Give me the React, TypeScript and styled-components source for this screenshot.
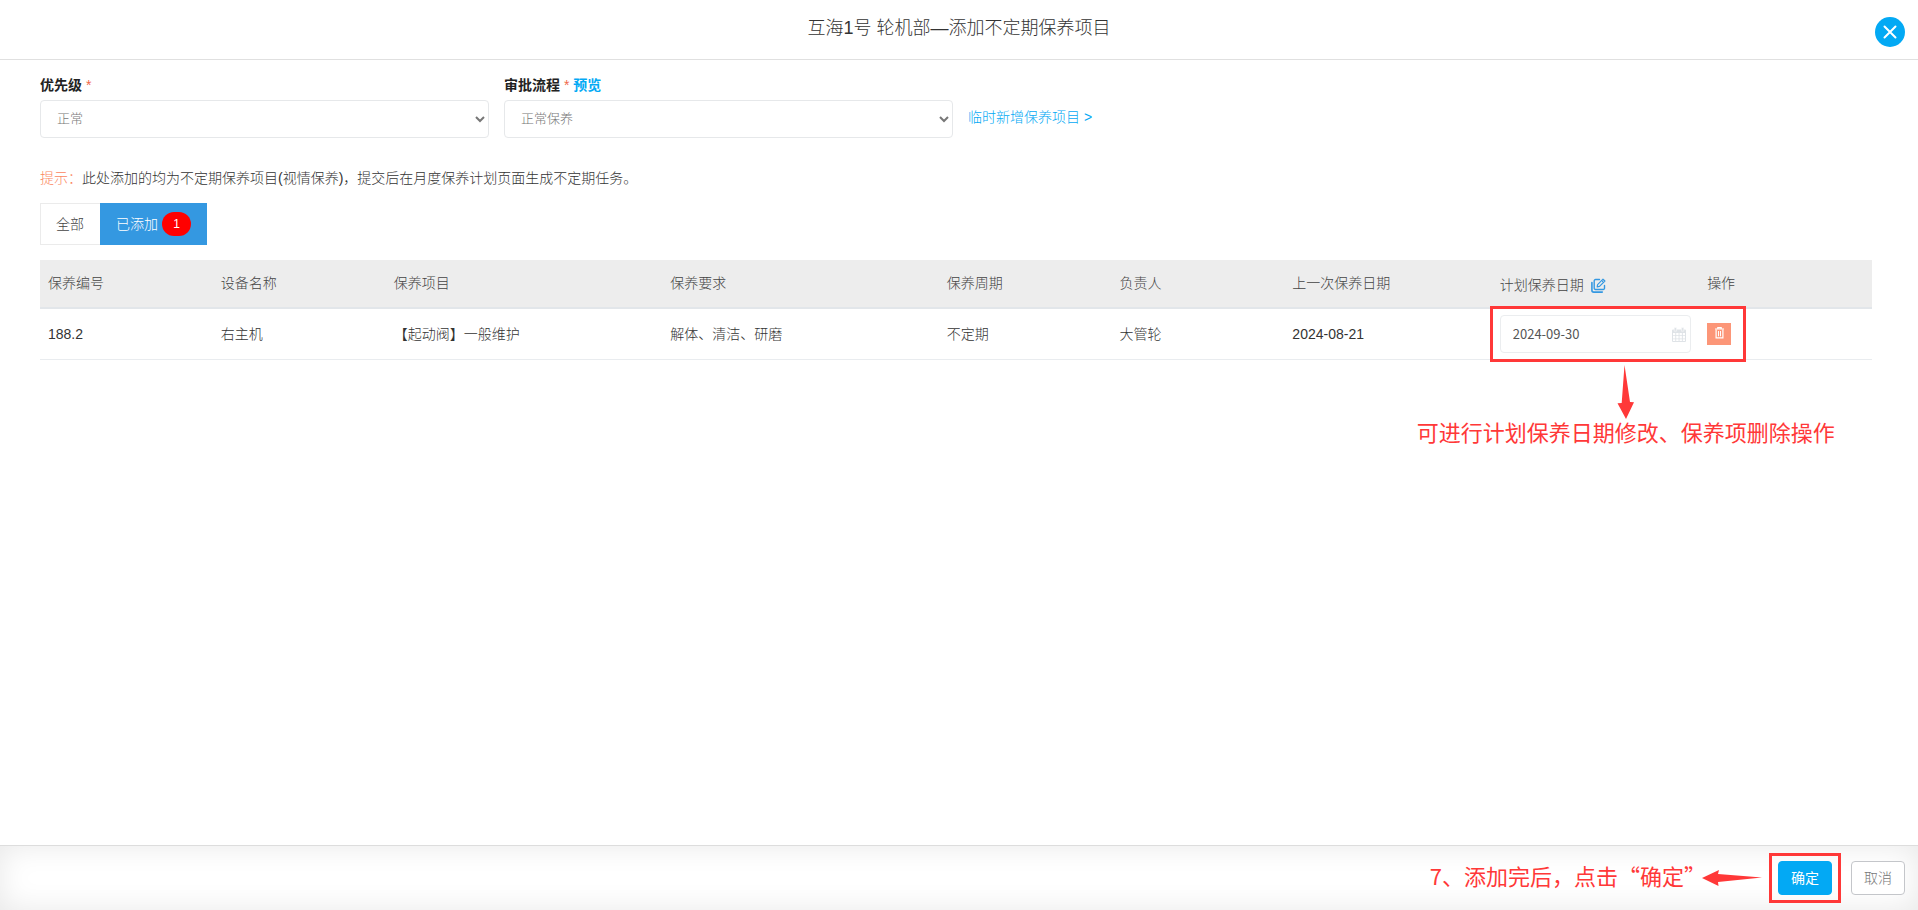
import React, { useState } from "react";
import styled, { createGlobalStyle } from "styled-components";

const SANS = `"Liberation Sans", "Noto Sans CJK SC", sans-serif`;
const CJK = `"Noto Sans CJK SC", "Liberation Sans", sans-serif`;
const ACCENT = "#03a9f4";
const MARK = "#ff3838";

const GlobalStyle = createGlobalStyle`
  * { box-sizing: border-box; }
  body {
    margin: 0;
    background: #fff;
    color: #333;
    font-family: ${SANS};
    font-size: 14px;
    font-weight: 300;
    line-height: 20px;
  }
  button, input, select { font-family: inherit; font-weight: inherit; margin: 0; }
`;

const Page = styled.div`
  display: flex;
  flex-direction: column;
  min-height: 100vh;
`;

const Header = styled.header`
  display: grid;
  grid-template-columns: 1fr auto 1fr;
  height: 60px;
  padding: 16px 13px 0;
  border-bottom: 1px solid #e0e0e0;
`;

const Title = styled.h1`
  grid-column: 2;
  margin: 0;
  font-size: 18px;
  font-weight: 300;
  line-height: 24px;
`;

const CloseButton = styled.button`
  justify-self: end;
  display: flex;
  align-items: center;
  justify-content: center;
  width: 30px;
  height: 30px;
  padding: 0;
  margin-top: 1px;
  border: 0;
  border-radius: 50%;
  background: ${ACCENT};
  cursor: pointer;
`;

const Main = styled.main`
  flex: 1;
  padding: 15px 46px 24px 40px;
`;

const Filters = styled.div`
  display: flex;
  gap: 15px;
`;

const Field = styled.div`
  flex: 0 0 calc(25% - 9px);
`;

const FieldLabel = styled.div`
  height: 25px;
  color: #222;
  font-weight: 700;
`;

const Required = styled.span`
  color: #f0694a;
  font-weight: 400;
`;

const Link = styled.a`
  color: ${ACCENT};
  text-decoration: none;
`;

const FilterLink = styled(Link)`
  padding-top: 32px;
`;

const Select = styled.select`
  display: block;
  width: 100%;
  height: 38px;
  padding: 0 1px 2px 12px;
  border: 1px solid #e6e8ea;
  border-radius: 4px;
  background: #fff;
  color: #777;
  font-size: 13px;
`;

const Tip = styled.p`
  margin: 30px 0 15px;
`;

const TipLabel = styled.span`
  color: #fb8560;
`;

const Tabs = styled.div`
  display: flex;
  margin-bottom: 15px;
`;

const Tab = styled.button<{ $active?: boolean }>`
  display: flex;
  align-items: center;
  gap: 4px;
  height: 42px;
  padding: ${(p) => (p.$active ? "0 16px 2px" : "0 16px 2px 15px")};
  border: ${(p) => (p.$active ? "0" : "1px solid #ebebeb")};
  border-right: 0;
  background: ${(p) => (p.$active ? "#3498e1" : "#fff")};
  color: ${(p) => (p.$active ? "#fff" : "#444")};
  font-size: 14px;
  cursor: pointer;
`;

const Badge = styled.span`
  width: 29px;
  height: 24px;
  margin-top: 2px;
  border-radius: 12px;
  background: #f00;
  font-size: 12px;
  font-weight: 400;
  line-height: 24px;
  text-align: center;
`;

const Table = styled.table`
  width: 100%;
  table-layout: fixed;
  border-collapse: separate;
  border-spacing: 0;
`;

const Th = styled.th`
  height: 49px;
  padding: 0 8px 2px;
  border-bottom: 2px solid #e2e6ea;
  background: #ededed;
  color: #444;
  font-weight: 300;
  text-align: left;
`;

const ThContent = styled.span`
  display: flex;
  align-items: center;
  gap: 7px;
  padding-top: 4px;
`;

const Td = styled.td`
  position: relative;
  height: 51px;
  padding: 0 8px;
  border-bottom: 1px solid #e9ecef;
`;

const IconButton = styled.button`
  display: flex;
  padding: 2px 0 0;
  border: 0;
  background: none;
  color: #3498e1;
  cursor: pointer;
`;

const DateField = styled.label`
  display: flex;
  align-items: center;
  height: 38px;
  padding: 0 4px 0 12px;
  border: 1px solid #ebedef;
  border-radius: 4px;
  color: #dfe3e7;
`;

const DateInput = styled.input`
  flex: 1;
  min-width: 0;
  padding: 0 0 2px;
  border: 0;
  outline: 0;
  background: none;
  color: #555;
  font-family: ${CJK};
  font-size: 13px;
  font-weight: 400;
`;

const DeleteButton = styled.button`
  display: flex;
  justify-content: center;
  width: 24px;
  height: 22px;
  padding: 4px 0 0 1px;
  border: 0;
  background: #fc9678;
  color: #fff;
  cursor: pointer;
`;

const RowCallout = styled.div`
  position: absolute;
  z-index: 1;
  top: -3px;
  left: -2px;
  width: 256px;
  height: 56px;
  border: 3px solid ${MARK};
  pointer-events: none;
`;

const RowCalloutNote = styled.div`
  position: absolute;
  top: 56px;
  right: -92px;
  display: flex;
  flex-direction: column;
  align-items: center;
`;

const NoteText = styled.span`
  color: ${MARK};
  font-family: ${CJK};
  font-size: 22px;
  font-weight: 400;
  line-height: 24px;
  white-space: nowrap;
`;

const Footer = styled.footer`
  display: flex;
  align-items: center;
  justify-content: flex-end;
  gap: 19px;
  height: 65px;
  padding: 0 13px;
  border-top: 1px solid #ddd;
  box-shadow: inset 0 0 30px #e8e8e8;
`;

const FooterButton = styled.button<{ $primary?: boolean }>`
  width: 54px;
  height: 34px;
  padding: 0 0 2px;
  border: 1px solid ${(p) => (p.$primary ? ACCENT : "#c4c6ca")};
  border-radius: 4px;
  background: ${(p) => (p.$primary ? ACCENT : "#fff")};
  color: ${(p) => (p.$primary ? "#fff" : "#777")};
  font-size: 14px;
  font-weight: ${(p) => (p.$primary ? 400 : 300)};
  cursor: pointer;
`;

const ConfirmWrap = styled.div`
  position: relative;
`;

const ConfirmFrame = styled.div`
  position: absolute;
  inset: -8px -9px;
  border: 3px solid ${MARK};
  pointer-events: none;
`;

const ConfirmNote = styled.div`
  position: absolute;
  top: 2px;
  right: 100%;
  display: flex;
  align-items: center;
  padding-right: 16px;
`;

const LeftArrow = styled.svg`
  margin: 6px 0 0 -4px;
`;

const CloseIcon = () => (
  <svg width="14" height="14" viewBox="0 0 14 14" aria-hidden="true">
    <path d="M1.5 1.5l11 11M12.5 1.5l-11 11" stroke="#fff" strokeWidth="2" strokeLinecap="round" />
  </svg>
);

const EditIcon = () => (
  <svg width="15" height="15" viewBox="0 0 15 15" fill="none" stroke="currentColor" strokeLinejoin="round" strokeLinecap="round" aria-hidden="true">
    <path d="M8.500 1.500H4.500a1.300 1.300 0 0 0-1.300 1.300v7.400a1.300 1.300 0 0 0 1.300 1.300h7.700a1.300 1.300 0 0 0 1.300-1.300V7.500" strokeWidth="1.400" />
    <path d="M.9 4.500v7.800A1.800 1.800 0 0 0 2.700 14.100h8.600" strokeWidth="1.600" />
    <path d="M6.200 8.800l.4-2.200L12 1.200l1.900 1.800-5.400 5.400z" strokeWidth="1.200" />
    <path d="M10.600 2.600l1.900 1.800" strokeWidth="1" />
  </svg>
);

const CalendarIcon = () => (
  <svg width="14" height="15" viewBox="0 0 14 15" aria-hidden="true">
    <path d="M1 2.500h12a1 1 0 0 1 1 1V14a1 1 0 0 1-1 1H1a1 1 0 0 1-1-1V3.500a1 1 0 0 1 1-1z" fill="currentColor" />
    <path d="M2.200.500h2.400v3.700H2.200zM9.400.500h2.400v3.700H9.400z" fill="currentColor" stroke="#fff" strokeWidth=".5" />
    <path d="M1 6h2.300v2.300H1zM4.200 6h2.400v2.300H4.200zM7.500 6h2.400v2.300H7.500zM10.800 6H13v2.300h-2.200zM1 9.100h2.300v2.300H1zM4.200 9.100h2.400v2.300H4.200zM7.500 9.100h2.400v2.300H7.500zM10.800 9.100H13v2.300h-2.200zM1 12.200h2.300V14H1zM4.200 12.200h2.400V14H4.200zM7.500 12.200h2.400V14H7.500zM10.800 12.200H13V14h-2.200z" fill="#fff" />
  </svg>
);

const TrashIcon = () => (
  <svg width="9" height="12" viewBox="0 0 9 12" fill="none" stroke="currentColor" aria-hidden="true">
    <path d="M0 2h9M2.800 2V.6h3.400V2" strokeWidth="1.200" />
    <path d="M1.100 2.500v8.300h6.800V2.500" strokeWidth="1.200" />
    <path d="M3.500 4v5.300M5.500 4v5.300" strokeWidth="1" />
  </svg>
);

const columns = [
  { title: "保养编号", share: 5 },
  { title: "设备名称", share: 5 },
  { title: "保养项目", share: 8 },
  { title: "保养要求", share: 8 },
  { title: "保养周期", share: 5 },
  { title: "负责人", share: 5 },
  { title: "上一次保养日期", share: 6 },
  { title: "计划保养日期", share: 6, editable: true },
  { title: "操作", share: 5 },
];
const totalShare = columns.reduce((sum, c) => sum + c.share, 0);

const Col = styled.col<{ $share: number }>`
  width: ${(p) => (p.$share / totalShare) * 100}%;
`;

const rowCells = ["188.2", "右主机", "【起动阀】一般维护", "解体、清洁、研磨", "不定期", "大管轮", "2024-08-21"];

export default function App() {
  const [date, setDate] = useState("2024-09-30");

  return (
    <>
      <GlobalStyle />
      <Page>
        <Header>
          <Title>互海1号 轮机部—添加不定期保养项目</Title>
          <CloseButton type="button" aria-label="关闭">
            <CloseIcon />
          </CloseButton>
        </Header>

        <Main>
          <Filters>
            <Field>
              <FieldLabel>
                <label htmlFor="priority">优先级</label> <Required>*</Required>
              </FieldLabel>
              <Select id="priority">
                <option>正常</option>
              </Select>
            </Field>
            <Field>
              <FieldLabel>
                <label htmlFor="flow">审批流程</label> <Required>*</Required> <Link href="#preview">预览</Link>
              </FieldLabel>
              <Select id="flow">
                <option>正常保养</option>
              </Select>
            </Field>
            <FilterLink href="#new">临时新增保养项目 &gt;</FilterLink>
          </Filters>

          <Tip>
            <TipLabel>提示：</TipLabel>此处添加的均为不定期保养项目(视情保养)，提交后在月度保养计划页面生成不定期任务。
          </Tip>

          <Tabs>
            <Tab type="button">全部</Tab>
            <Tab type="button" $active>
              已添加<Badge>1</Badge>
            </Tab>
          </Tabs>

          <Table>
            <colgroup>
              {columns.map((c) => (
                <Col key={c.title} $share={c.share} />
              ))}
            </colgroup>
            <thead>
              <tr>
                {columns.map((c) => (
                  <Th key={c.title} scope="col">
                    {c.editable ? (
                      <ThContent>
                        {c.title}
                        <IconButton type="button" aria-label="批量修改日期">
                          <EditIcon />
                        </IconButton>
                      </ThContent>
                    ) : (
                      c.title
                    )}
                  </Th>
                ))}
              </tr>
            </thead>
            <tbody>
              <tr>
                {rowCells.map((text) => (
                  <Td key={text}>{text}</Td>
                ))}
                <Td>
                  <DateField>
                    <DateInput aria-label="计划保养日期" value={date} onChange={(e) => setDate(e.target.value)} />
                    <CalendarIcon />
                  </DateField>
                  <RowCallout>
                    <RowCalloutNote>
                      <svg width="18" height="54" viewBox="0 0 18 54" aria-hidden="true">
                        <path d="M7.500 0L13 37l4 .3L9 54 .5 38.300l4.200-.3z" fill={MARK} />
                      </svg>
                      <NoteText>可进行计划保养日期修改、保养项删除操作</NoteText>
                    </RowCalloutNote>
                  </RowCallout>
                </Td>
                <Td>
                  <DeleteButton type="button" aria-label="删除">
                    <TrashIcon />
                  </DeleteButton>
                </Td>
              </tr>
            </tbody>
          </Table>
        </Main>

        <Footer>
          <ConfirmWrap>
            <ConfirmNote>
              <NoteText>7、添加完后，点击“确定”</NoteText>
              <LeftArrow width="60" height="18" viewBox="0 0 60 18" aria-hidden="true">
                <path d="M0 9L17 1l-1 4L60 8.500 16 13l.5 4z" fill={MARK} />
              </LeftArrow>
            </ConfirmNote>
            <FooterButton type="button" $primary>
              确定
            </FooterButton>
            <ConfirmFrame />
          </ConfirmWrap>
          <FooterButton type="button">取消</FooterButton>
        </Footer>
      </Page>
    </>
  );
}
